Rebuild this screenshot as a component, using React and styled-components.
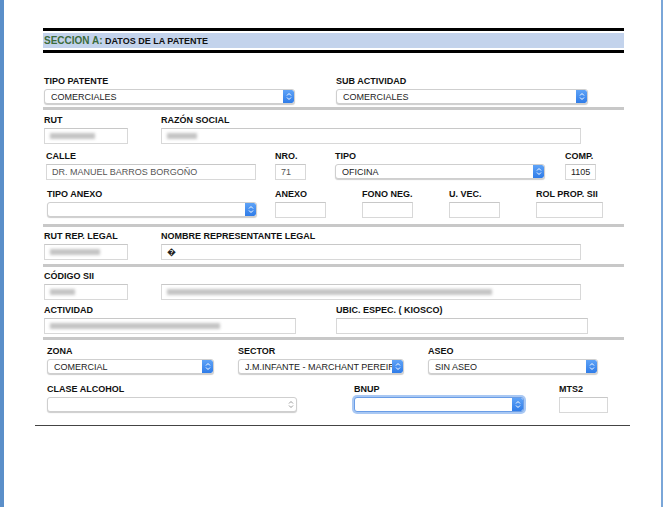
import React from "react";
import styled, { createGlobalStyle } from "styled-components";

const Global = createGlobalStyle`
  body { margin: 0; background: #fff; font-family: "Liberation Sans", Arial, sans-serif; }
`;

const Frame = styled.div`
  width: 663px;
  height: 507px;
  box-sizing: border-box;
  border-left: 4px solid #5b8fc9;
  border-right: 2px solid #7aa6d8;
  padding-top: 28px;
`;

const Sheet = styled.div`
  margin-left: 39px;
  width: 581px;
`;

const Header = styled.div`
  border-top: 3px solid #000;
  border-bottom: 3px solid #000;
  padding: 2px 0;
`;

const HeaderBand = styled.div`
  background: #c3d3ec;
  height: 15px;
  line-height: 15px;
  padding-left: 1px;
  font-size: 9px;
  font-weight: bold;
  color: #111;
  span { color: #3b6b3b; font-size: 10px; }
`;

const Row = styled.div`
  display: flex;
  align-items: flex-start;
  margin-top: ${(p) => p.$mt || 0}px;
`;

const Field = styled.div`
  margin-left: ${(p) => p.$ml || 0}px;
  width: ${(p) => p.$w}px;
  flex: none;
`;

const Label = styled.div`
  font-size: 9px;
  font-weight: bold;
  color: #111;
  height: 11px;
  line-height: 11px;
  margin-bottom: 2px;
  white-space: nowrap;
`;

const Input = styled.div`
  height: 16px;
  box-sizing: border-box;
  border: 1px solid #d8d8d8;
  border-top-color: #c8c8c8;
  font-size: 9px;
  color: ${(p) => (p.$dark ? "#222" : "#555")};
  line-height: 14px;
  padding-left: 5px;
  white-space: nowrap;
  overflow: hidden;
  display: flex;
  align-items: center;
`;

const Select = styled.div`
  height: 15px;
  box-sizing: border-box;
  border-radius: 3px;
  border: 1px solid ${(p) => (p.$focus ? "#6a9de6" : "#cfcfcf")};
  box-shadow: ${(p) =>
    p.$focus ? "0 0 0 2px #a9c8f3" : "0 1px 1px rgba(0,0,0,0.2)"};
  background: #fff;
  display: flex;
  align-items: center;
  font-size: 9px;
  color: #222;
  padding-left: 6px;
  overflow: hidden;
  white-space: nowrap;
`;

const SelText = styled.div`
  flex: 1;
  min-width: 0;
  overflow: hidden;
  white-space: nowrap;
`;

const Arrows = styled.div`
  width: 11px;
  height: 100%;
  flex: none;
  border-radius: 0 2px 2px 0;
  background: ${(p) => (p.$plain ? "transparent" : "linear-gradient(#5fa3f7, #2f7ce8)")};
  display: flex;
  align-items: center;
  justify-content: center;
`;

const Blur = styled.div`
  height: 6px;
  width: ${(p) => p.$w}px;
  background: #c4c4c4;
  filter: blur(1.5px);
`;

const Divider = styled.div`
  height: 3px;
  background: #c8c8c8;
  margin-top: ${(p) => p.$mt}px;
`;

const Bottom = styled.div`
  margin-left: -8px;
  width: 595px;
  height: 1px;
  background: #444;
  margin-top: 12px;
`;

const Chev = ({ color = "#fff" }) => (
  <svg width="6" height="9" viewBox="0 0 6 9">
    <path d="M1 3.5 L3 1.5 L5 3.5 M1 5.5 L3 7.5 L5 5.5" fill="none" stroke={color} strokeWidth="1" />
  </svg>
);

const Sel = ({ children, focus, plain }) => (
  <Select $focus={focus}>
    <SelText>{children}</SelText>
    <Arrows $plain={plain}>
      <Chev color={plain ? "#999" : "#fff"} />
    </Arrows>
  </Select>
);

export default function App() {
  return (
    <Frame>
      <Global />
      <Sheet>
        <Header>
          <HeaderBand>
            <span>SECCION A:</span> DATOS DE LA PATENTE
          </HeaderBand>
        </Header>

        <Row $mt={23}>
          <Field $ml={1} $w={251}>
            <Label>TIPO PATENTE</Label>
            <Sel>COMERCIALES</Sel>
          </Field>
          <Field $ml={41} $w={252}>
            <Label>SUB ACTIVIDAD</Label>
            <Sel>COMERCIALES</Sel>
          </Field>
        </Row>
        <Divider $mt={3} />

        <Row $mt={5}>
          <Field $ml={1} $w={84}>
            <Label>RUT</Label>
            <Input><Blur $w={45} /></Input>
          </Field>
          <Field $ml={33} $w={420}>
            <Label>RAZÓN SOCIAL</Label>
            <Input><Blur $w={30} /></Input>
          </Field>
        </Row>

        <Row $mt={7}>
          <Field $ml={3} $w={210}>
            <Label>CALLE</Label>
            <Input>DR. MANUEL BARROS BORGOÑO</Input>
          </Field>
          <Field $ml={19} $w={31}>
            <Label>NRO.</Label>
            <Input>71</Input>
          </Field>
          <Field $ml={29} $w={210}>
            <Label>TIPO</Label>
            <Sel>OFICINA</Sel>
          </Field>
          <Field $ml={20} $w={31}>
            <Label>COMP.</Label>
            <Input $dark>1105</Input>
          </Field>
        </Row>

        <Row $mt={9}>
          <Field $ml={4} $w={210}>
            <Label>TIPO ANEXO</Label>
            <Sel />
          </Field>
          <Field $ml={18} $w={51}>
            <Label>ANEXO</Label>
            <Input />
          </Field>
          <Field $ml={36} $w={51}>
            <Label>FONO NEG.</Label>
            <Input />
          </Field>
          <Field $ml={36} $w={51}>
            <Label>U. VEC.</Label>
            <Input />
          </Field>
          <Field $ml={36} $w={67}>
            <Label>ROL PROP. SII</Label>
            <Input />
          </Field>
        </Row>
        <Divider $mt={6} />

        <Row $mt={4}>
          <Field $ml={1} $w={84}>
            <Label>RUT REP. LEGAL</Label>
            <Input><Blur $w={50} /></Input>
          </Field>
          <Field $ml={33} $w={420}>
            <Label>NOMBRE REPRESENTANTE LEGAL</Label>
            <Input $dark>�</Input>
          </Field>
        </Row>
        <Divider $mt={4} />

        <Row $mt={4}>
          <Field $ml={1} $w={84}>
            <Label>CÓDIGO SII</Label>
            <Input><Blur $w={25} /></Input>
          </Field>
          <Field $ml={33} $w={420}>
            <Label />
            <Input><Blur $w={325} /></Input>
          </Field>
        </Row>

        <Row $mt={5}>
          <Field $ml={1} $w={252}>
            <Label>ACTIVIDAD</Label>
            <Input><Blur $w={170} /></Input>
          </Field>
          <Field $ml={40} $w={252}>
            <Label>UBIC. ESPEC. ( KIOSCO)</Label>
            <Input />
          </Field>
        </Row>
        <Divider $mt={3} />

        <Row $mt={6}>
          <Field $ml={4} $w={167}>
            <Label>ZONA</Label>
            <Sel>COMERCIAL</Sel>
          </Field>
          <Field $ml={24} $w={166}>
            <Label>SECTOR</Label>
            <Sel>J.M.INFANTE - MARCHANT PEREIRA</Sel>
          </Field>
          <Field $ml={24} $w={170}>
            <Label>ASEO</Label>
            <Sel>SIN ASEO</Sel>
          </Field>
        </Row>

        <Row $mt={10}>
          <Field $ml={4} $w={250}>
            <Label>CLASE ALCOHOL</Label>
            <Sel plain />
          </Field>
          <Field $ml={57} $w={170}>
            <Label>BNUP</Label>
            <Sel focus />
          </Field>
          <Field $ml={35} $w={49}>
            <Label>MTS2</Label>
            <Input />
          </Field>
        </Row>
        <Bottom />
      </Sheet>
    </Frame>
  );
}
